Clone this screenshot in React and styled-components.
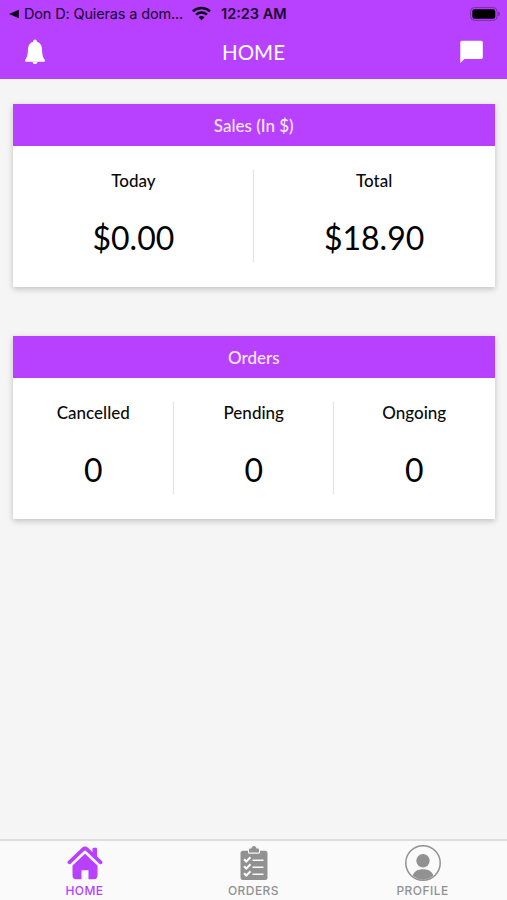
import React from "react"
import styled, { createGlobalStyle } from "styled-components"

const purple = "#b840ff"

const GlobalStyle = createGlobalStyle`
  * {
    box-sizing: border-box;
  }
  body {
    margin: 0;
    background: #f5f5f5;
    font-family: Lato, "Open Sans", sans-serif;
  }
`

const Screen = styled.div`
  display: flex;
  flex-direction: column;
  height: 100vh;
  min-height: 600px;
  overflow: hidden;
`

const Header = styled.header`
  height: 79px;
  background: ${purple};
`

const StatusBar = styled.div`
  display: flex;
  align-items: center;
  height: 27px;
  padding: 0 7px 0 9px;
  color: #17042b;
  font-family: Inter, sans-serif;
  font-size: 14.5px;
  line-height: 27px;
`

const BackApp = styled.span`
  width: 159px;
  margin: 0 9px 0 5px;
  white-space: nowrap;
  letter-spacing: -0.15px;
`

const Clock = styled.span`
  flex: 1;
  margin-left: 10px;
  font-weight: 600;
  white-space: nowrap;
`

const TitleBar = styled.div`
  display: flex;
  align-items: center;
  justify-content: space-between;
  height: 50px;
  padding: 0 24px;
`

const Title = styled.h1`
  margin: 0;
  padding-left: 1px;
  color: #fff;
  font-size: 20.5px;
  font-weight: 400;
  line-height: 50px;
`

const Content = styled.main`
  flex: 1;
  padding: 24.5px 12.5px 0 13px;
`

const Card = styled.section`
  height: 183.5px;
  margin-bottom: 48.5px;
  background: #fff;
  box-shadow: 0 2px 6px rgba(0, 0, 0, 0.22);
`

const CardTitle = styled.h2`
  height: 42.5px;
  margin: 0;
  background: ${purple};
  color: #fbe9ff;
  font-size: 17px;
  font-weight: 500;
  line-height: 43px;
  text-align: center;
`

const Stats = styled.div`
  display: flex;
  padding: 24px 0;
`

const Stat = styled.div`
  flex: 1;
  height: 92px;
  text-align: center;

  & + & {
    border-left: ${props => (props.$wide ? "2px solid #ddeffc" : "1px solid #c8eafb")};
    margin-left: -1px;
  }
`

const Label = styled.div`
  color: #0a0a0a;
  font-size: 17px;
  font-weight: 500;
  line-height: 21px;
`

const Value = styled.div`
  margin-top: 27px;
  color: #000;
  font-size: 32px;
  line-height: 40px;
`

const TabBar = styled.nav`
  display: flex;
  height: 61px;
  border-top: 2px solid #dedede;
  background: #fafafa;
`

const Tab = styled.div`
  flex: 1;
  display: flex;
  flex-direction: column;
  align-items: center;
  padding-top: 4px;
  color: ${props => (props.$active ? purple : "#919191")};
  font-family: Inter, sans-serif;
  font-size: 12px;
  font-weight: 500;
  line-height: 14px;
  letter-spacing: 0.45px;

  svg {
    margin-bottom: 3px;
  }
`

const BackArrow = () => (
  <svg width="10" height="10" viewBox="0 0 10 10">
    <path d="M0 5L9.8 .7V9.3Z" fill="#0b0018" />
  </svg>
)

const WifiIcon = () => (
  <svg width="19" height="15" viewBox="0 0 19 15" fill="none" stroke="#0b0018" strokeWidth="2.5">
    <path d="M1 5.3C5.8 .8 13.2 .8 18 5.3" />
    <path d="M4.1 8.6C7.2 5.8 11.8 5.8 14.9 8.6" />
    <path d="M9.5 14.2L6.5 11.2C8.2 9.7 10.8 9.7 12.5 11.2Z" fill="#0b0018" stroke="none" />
  </svg>
)

const BatteryIcon = () => (
  <svg width="30" height="14" viewBox="0 0 30 14">
    <rect x=".6" y=".6" width="26.5" height="12.8" rx="3.8" fill="none" stroke="#7a2cab" strokeWidth="1" />
    <rect x="2.3" y="2.3" width="23" height="9.4" rx="2.2" fill="#000" />
    <path d="M28.4 4.8C30.3 5.4 30.3 8.6 28.4 9.2Z" fill="#6d2699" />
  </svg>
)

const BellIcon = () => (
  <svg width="22" height="26" viewBox="0 0 22 26" fill="#fff">
    <path d="M11 .4C9.7 .4 9 1.4 9.1 2.8C5.6 3.8 4.2 6.4 4 10C3.8 15.5 3.2 18.3 1.3 20.8C.8 21.5 1 22.7 1.8 22.7H20.2C21 22.7 21.2 21.5 20.7 20.8C18.8 18.3 18.2 15.5 18 10C17.8 6.4 16.4 3.8 12.9 2.8C13 1.4 12.3 .4 11 .4Z" />
    <path d="M8.4 22.7H13.6C13.3 24.2 12.4 25 11 25S8.7 24.2 8.4 22.7Z" />
  </svg>
)

const ChatIcon = () => (
  <svg width="23" height="24" viewBox="0 0 23 24" fill="#fff">
    <path d="M2 .8H21C22.2 .8 22.8 1.5 22.8 2.6V17.3C22.8 18.5 22.2 19.1 21 19.1H4.5L.3 23V2.6C.3 1.5 .9 .8 2 .8Z" />
  </svg>
)

const HomeIcon = () => (
  <svg width="36" height="36" viewBox="0 0 36 36" fill="currentColor">
    <path
      d="M2.4 17.3L16 4.4Q18 2.6 20 4.4L33.6 17.3"
      fill="none"
      stroke="currentColor"
      strokeWidth="3.7"
      strokeLinecap="round"
    />
    <path d="M25.5 3.8Q25.5 2.8 26.5 2.8H29Q30 2.8 30 3.8V13L25.5 8.8Z" />
    <path d="M18 8.8L30.5 20.5V30.3C30.5 32.8 29.2 34.2 26.7 34.2H21.5V25.2H14.5V34.2H9.3C6.8 34.2 5.5 32.8 5.5 30.3V20.5Z" />
  </svg>
)

const OrdersIcon = () => (
  <svg width="28" height="36" viewBox="0 0 28 36">
    <path
      d="M3 5.8H8V7.3Q8 8.8 9.5 8.8H18.5Q20 8.8 20 7.3V5.8H25Q27.5 5.8 27.5 8.3V32.5Q27.5 35 25 35H3Q.5 35 .5 32.5V8.3Q.5 5.8 3 5.8Z"
      fill="currentColor"
    />
    <path
      d="M10 3.6H11.5C11.8 2 12.7 1.1 14 1.1S16.2 2 16.5 3.6H18Q19 3.6 19 4.6V7.6H9V4.6Q9 3.6 10 3.6Z"
      fill="currentColor"
    />
    <g fill="none" stroke="#fafafa">
      <path d="M4 14.3L6.3 16.5L10.5 12.2M4 21.3L6.3 23.5L10.5 19.2M4 28.3L6.3 30.5L10.5 26.2" strokeWidth="2" />
      <path d="M12.5 15.2H23.5M12.5 22.2H23.5M12.5 29.2H23.5" strokeWidth="1.6" />
    </g>
  </svg>
)

const ProfileIcon = () => (
  <svg width="36" height="36" viewBox="0 0 36 36">
    <circle cx="18" cy="18" r="17.2" fill="none" stroke="currentColor" strokeWidth="1.5" />
    <circle cx="18" cy="15.8" r="6.7" fill="currentColor" />
    <path d="M7.7 30.6C9 26.2 12.8 24.2 18 24.2S27 26.2 28.3 30.6C25.5 33.3 22 34.7 18 34.7S10.5 33.3 7.7 30.6Z" fill="currentColor" />
  </svg>
)

const cards = [
  {
    title: "Sales (In $)",
    stats: [
      { label: "Today", value: "$0.00" },
      { label: "Total", value: "$18.90" },
    ],
  },
  {
    title: "Orders",
    stats: [
      { label: "Cancelled", value: "0" },
      { label: "Pending", value: "0" },
      { label: "Ongoing", value: "0" },
    ],
  },
]

const tabs = [
  { name: "HOME", Icon: HomeIcon, active: true },
  { name: "ORDERS", Icon: OrdersIcon },
  { name: "PROFILE", Icon: ProfileIcon },
]

const App = () => {
  return (
    <Screen>
      <GlobalStyle />
      <Header>
        <StatusBar>
          <BackArrow />
          <BackApp>Don D: Quieras a dom...</BackApp>
          <WifiIcon />
          <Clock>12:23 AM</Clock>
          <BatteryIcon />
        </StatusBar>
        <TitleBar>
          <BellIcon />
          <Title>HOME</Title>
          <ChatIcon />
        </TitleBar>
      </Header>

      <Content>
        {cards.map(card => (
          <Card key={card.title}>
            <CardTitle>{card.title}</CardTitle>
            <Stats>
              {card.stats.map(stat => (
                <Stat key={stat.label} $wide={card.stats.length === 2}>
                  <Label>{stat.label}</Label>
                  <Value>{stat.value}</Value>
                </Stat>
              ))}
            </Stats>
          </Card>
        ))}
      </Content>

      <TabBar>
        {tabs.map(({ name, Icon, active }) => (
          <Tab key={name} $active={active}>
            <Icon />
            {name}
          </Tab>
        ))}
      </TabBar>
    </Screen>
  )
}

export default App
